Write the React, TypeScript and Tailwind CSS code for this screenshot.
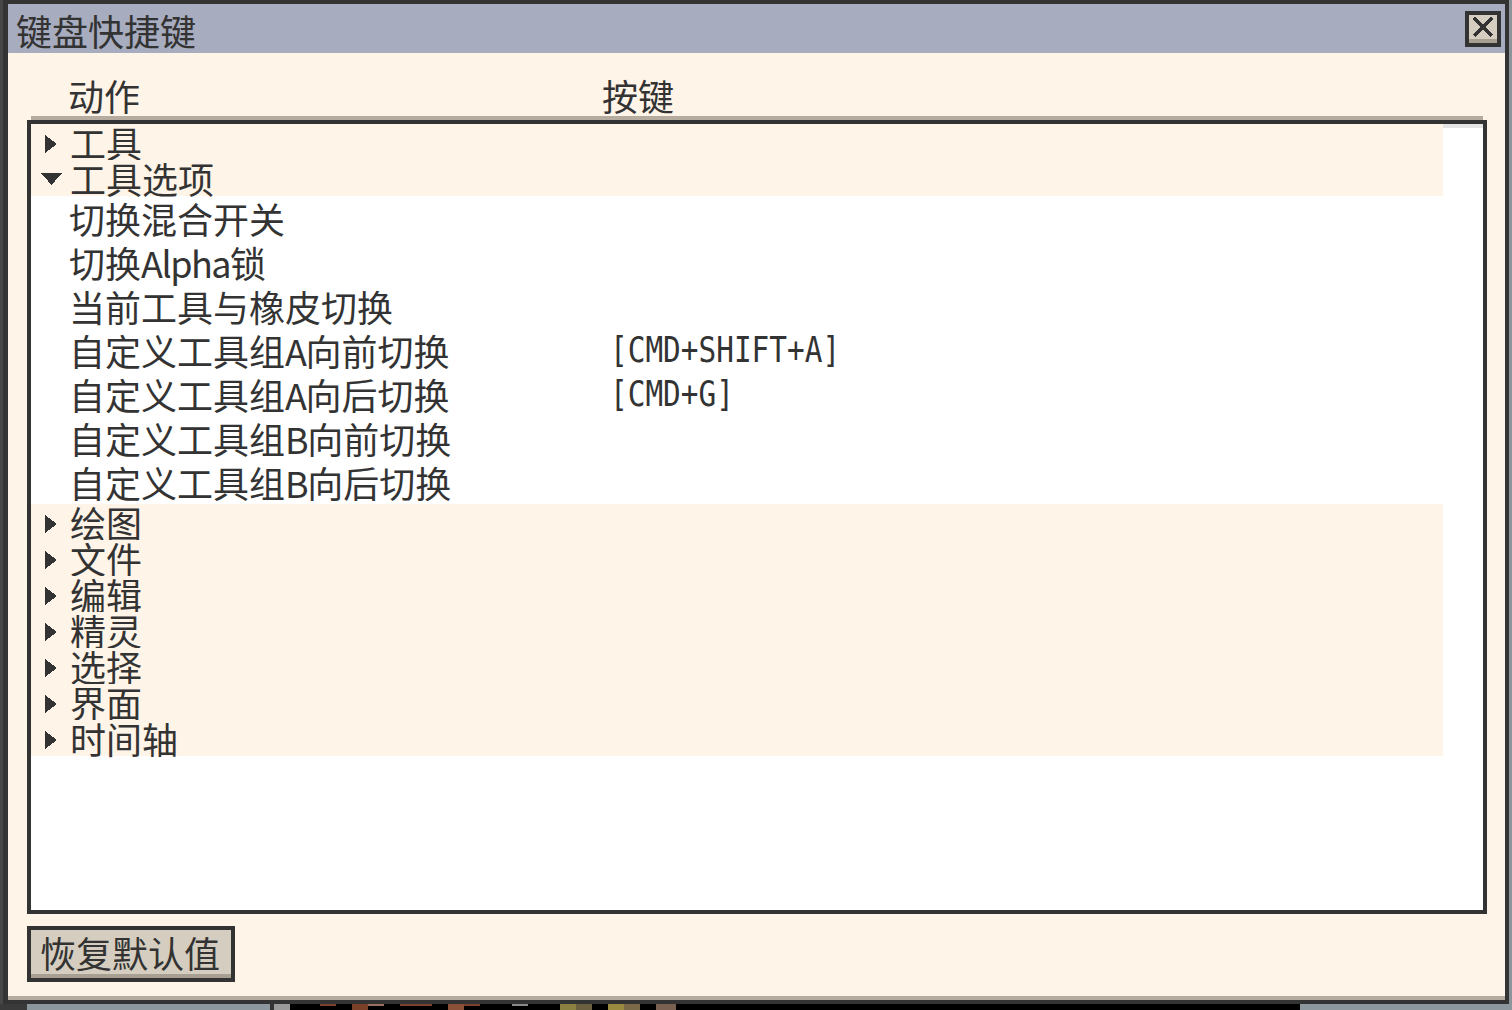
import React from "react";

const cjk = "font-['Noto_Sans_CJK_SC',sans-serif]";

function RightTri() {
  return (
    <svg width="12" height="18" viewBox="0 0 12 18" shapeRendering="crispEdges">
      <polygon points="0,0 12,9 0,18" fill="#333333" />
    </svg>
  );
}

function DownTri() {
  return (
    <svg width="21" height="12" viewBox="0 0 21 12" shapeRendering="crispEdges">
      <polygon points="0,0 21,0 10.5,12" fill="#333333" />
    </svg>
  );
}

function CategoryRow({ label, open }: { label: string; open?: boolean }) {
  return (
    <div className="h-[36px] bg-[#fff4e8] flex items-start">
      <div className={open ? "w-[39px] pl-[10px] pt-[13px]" : "w-[39px] pl-[14px] pt-[11px]"}>
        {open ? <DownTri /> : <RightTri />}
      </div>
      <span className="leading-[36px] text-[36px] whitespace-nowrap">{label}</span>
    </div>
  );
}

function Lat({ children }: { children: React.ReactNode }) {
  return <span className="tracking-[-1.5px]">{children}</span>;
}

function ChildRow({ label, keys }: { label: React.ReactNode; keys?: string }) {
  return (
    <div className="h-[44px] flex items-center">
      <div className="w-[579px] pl-[38px] leading-[36px] text-[36px] whitespace-nowrap">{label}</div>
      {keys ? (
        <span className="inline-block origin-left scale-x-[0.84] font-['DejaVu_Sans_Mono',monospace] text-[35px] leading-[36px] whitespace-nowrap">
          {keys}
        </span>
      ) : null}
    </div>
  );
}

export default function App() {
  return (
    <div className={`w-[1512px] h-[1010px] bg-[#8b9599] flex flex-col overflow-hidden text-[#333333] ${cjk}`}>
      <div className="h-[1004px] flex">
        <div className="w-[3px] bg-[#474747]" />
        <div className="w-[1506px] flex flex-col border-t-4 border-l-[5px] border-r-4 border-b-4 border-[#333333]">
          {/* Title bar */}
          <div className="h-[49px] bg-[#a7acbe] flex items-center justify-between pl-[8px] pr-[4px]">
            <span className="text-[36px] leading-[36px] mt-[2px]">键盘快捷键</span>
            <div className="relative w-[36px] h-[36px] border-4 border-[#333333] bg-[#d5cdbf] flex flex-col">
              <div className="flex-1 flex items-center justify-center">
                <svg width="22" height="20" viewBox="0 0 22 20" shapeRendering="crispEdges">
                  <line x1="2" y1="1" x2="20" y2="19" stroke="#333333" strokeWidth="4" />
                  <line x1="20" y1="1" x2="2" y2="19" stroke="#333333" strokeWidth="4" />
                </svg>
              </div>
              <div className="h-[4px] bg-[#a89f93]" />
            </div>
          </div>

          {/* Body */}
          <div className="flex-1 bg-[#fff4e8] flex flex-col pl-[19px] pr-[18px] pt-[24px]">
            <div className="h-[36px] flex text-[36px] leading-[36px]">
              <span className="ml-[41px] w-[534px]">动作</span>
              <span>按键</span>
            </div>
            <div className="mt-[3px] mx-[4px] h-[4px] bg-[#b5ab9e]" />
            <div className="h-[794px] border-4 border-[#333333] bg-white flex">
              <div className="w-[1412px] flex flex-col">
                <CategoryRow label="工具" />
                <CategoryRow label="工具选项" open />
                <ChildRow label="切换混合开关" />
                <ChildRow label={<>切换<Lat>Alpha</Lat>锁</>} />
                <ChildRow label="当前工具与橡皮切换" />
                <ChildRow label={<>自定义工具组<Lat>A</Lat>向前切换</>} keys="[CMD+SHIFT+A]" />
                <ChildRow label={<>自定义工具组<Lat>A</Lat>向后切换</>} keys="[CMD+G]" />
                <ChildRow label={<>自定义工具组<Lat>B</Lat>向前切换</>} />
                <ChildRow label={<>自定义工具组<Lat>B</Lat>向后切换</>} />
                <CategoryRow label="绘图" />
                <CategoryRow label="文件" />
                <CategoryRow label="编辑" />
                <CategoryRow label="精灵" />
                <CategoryRow label="选择" />
                <CategoryRow label="界面" />
                <CategoryRow label="时间轴" />
              </div>
              <div className="flex-1 flex flex-col">
                <div className="h-[4px] bg-[#e4e4e4]" />
              </div>
            </div>
            <div className="mt-[12px] relative w-[208px] h-[56px] border-4 border-[#333333] bg-[#d5cdbf] flex flex-col">
              <div className="flex-1 flex items-center pl-[9px]">
                <span className="text-[36px] leading-[36px] whitespace-nowrap">恢复默认值</span>
              </div>
              <div className="h-[4px] bg-[#a89f93]" />
            </div>
          </div>
          <div className="h-[4px] bg-[#b5ab9e]" />
        </div>
        <div className="flex-1 bg-[#8b9599]" />
      </div>

      {/* background peeking below */}
      <div className="h-[6px] flex">
        <div className="w-[27px] bg-[#3a3a3a]" />
        <div className="w-[243px] bg-[#8b979c]" />
        <div className="w-[4px] bg-[#333333]" />
        <div className="w-[16px] bg-[#9a9a9a]" />
        <div className="flex-1 bg-black flex">
          <div className="w-[30px]" />
          <div className="w-[16px] h-[2px] bg-[#7a4030]" />
          <div className="w-[16px]" />
          <div className="w-[16px] bg-[#7a4028]" />
          <div className="w-[16px] h-[2px] bg-[#9a7060]" />
          <div className="w-[16px]" />
          <div className="w-[32px] h-[2px] bg-[#7a4030]" />
          <div className="w-[16px]" />
          <div className="w-[16px] bg-[#8a5038]" />
          <div className="w-[16px] h-[2px] bg-[#7a4030]" />
          <div className="w-[32px]" />
          <div className="w-[16px] h-[2px] bg-[#8a8a8a]" />
          <div className="w-[32px]" />
          <div className="w-[16px] bg-[#8a8040]" />
          <div className="w-[16px] bg-[#6a6040]" />
          <div className="w-[16px]" />
          <div className="w-[16px] bg-[#9a8a40]" />
          <div className="w-[16px] bg-[#7a6a48]" />
          <div className="w-[16px]" />
          <div className="w-[20px] bg-[#7a6050]" />
        </div>
        <div className="w-[212px] bg-[#8b979c]" />
      </div>
    </div>
  );
}
